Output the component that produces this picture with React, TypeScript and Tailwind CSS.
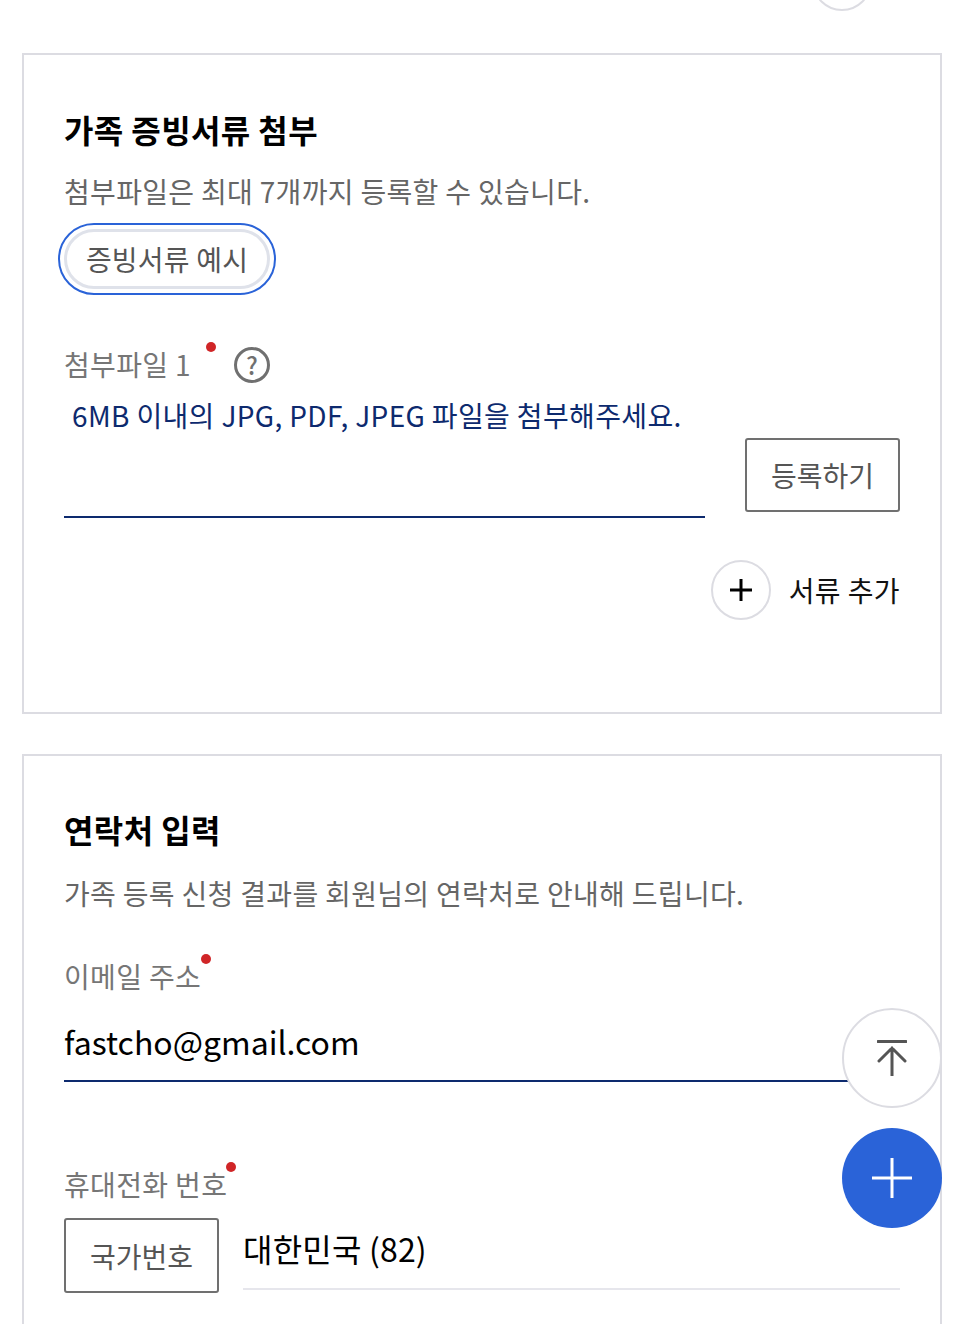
import React from 'react';

const font = { fontFamily: '"Noto Sans CJK KR", "Noto Sans", sans-serif' };

const Dot: React.FC<{ className: string }> = ({ className }) => (
  <span className={`absolute h-[10px] w-[10px] rounded-full bg-[#d02527] ${className}`} />
);

const BoxButton: React.FC<{ label: string; className?: string }> = ({ label, className = '' }) => (
  <button className={`flex w-[155px] shrink-0 items-center justify-center rounded-[3px] border-2 border-[#707070] bg-white text-[28px] leading-none text-[#555555] ${className}`}>
    {label}
  </button>
);

export default function App() {
  return (
    <div className="relative h-[1324px] w-[968px] overflow-hidden bg-white" style={font}>
      <div className="flex flex-col gap-[40px] pl-[22px] pr-[26px] pt-[53px]">
        {/* 가족 증빙서류 첨부 */}
        <section className="relative h-[661px] border-2 border-[#dcdce2] px-[40px] pt-[50px]">
          <div className="absolute right-[68px] top-[-104px] h-[60px] w-[60px] rounded-full border-2 border-[#dcdce2]" />
          <h2 className="text-[32px] font-bold leading-[48px] tracking-[0.4px] text-black">가족 증빙서류 첨부</h2>
          <p className="mt-[17px] text-[28px] leading-[42px] tracking-[0.32px] text-[#666666]">
            첨부파일은 최대 7개까지 등록할 수 있습니다.
          </p>
          <button className="mt-[11px] flex h-[72px] w-[218px] -translate-x-[6px] items-center justify-center rounded-full border-2 border-[#2a63d8] p-[4px]">
            <span className="flex h-full w-full items-center justify-center rounded-full border-[3px] border-[#dfe2ea] text-[28px] leading-none tracking-[0.2px] text-[#555555]">
              증빙서류 예시
            </span>
          </button>
          <div className="relative mt-[49px] flex h-[42px] items-center gap-[43px]">
            <span className="-translate-y-px text-[28px] leading-[42px] tracking-[0.35px] text-[#767676]">첨부파일 1</span>
            <Dot className="left-[142px] top-[-2px]" />
            <span className="flex h-[36px] w-[36px] items-center justify-center rounded-full border-[3px] border-[#707070] text-[24px] font-medium leading-none text-[#707070]">
              ?
            </span>
          </div>
          <div className="flex items-end justify-between">
            <div className="h-[132px] w-[641px] border-b-2 border-[#0d2a6e] pl-[8px] pt-[8px] text-[28px] leading-[42px] tracking-[0.36px] text-[#0d2a6e]">
              6MB 이내의 JPG, PDF, JPEG 파일을 첨부해주세요.
            </div>
            <BoxButton label="등록하기" className="mb-[6px] h-[74px]" />
          </div>
          <div className="mt-[42px] flex items-center justify-end gap-[18px]">
            <span className="flex h-[60px] w-[60px] items-center justify-center rounded-full border-2 border-[#dcdce2]">
              <svg width="22" height="22" viewBox="0 0 22 22" fill="none" stroke="#000000" strokeWidth="3">
                <path d="M0 11H22M11 0V22" />
              </svg>
            </span>
            <span className="text-[28px] leading-[42px] tracking-[0.4px] text-[#111111]">서류 추가</span>
          </div>
        </section>

        {/* 연락처 입력 */}
        <section className="h-[700px] border-2 border-[#dcdce2] px-[40px] pt-[49px]">
          <h2 className="text-[32px] font-bold leading-[48px] tracking-[0.4px] text-black">연락처 입력</h2>
          <p className="mt-[19px] text-[28px] leading-[42px] tracking-[0.32px] text-[#666666]">
            가족 등록 신청 결과를 회원님의 연락처로 안내해 드립니다.
          </p>
          <div className="relative mt-[41px] w-fit text-[28px] leading-[42px] tracking-[0.35px] text-[#767676]">
            이메일 주소
            <Dot className="right-[-10px] top-[-1px]" />
          </div>
          <div className="mt-[13px] h-[72px] border-b-2 border-[#0d2a6e] pt-[4px] text-[32px] leading-[54px] text-black">
            fastcho@gmail.com
          </div>
          <div className="relative mt-[81px] w-fit text-[28px] leading-[42px] tracking-[0.35px] text-[#767676]">
            휴대전화 번호
            <Dot className="right-[-9px] top-[-1px]" />
          </div>
          <div className="mt-[13px] flex items-start gap-[24px]">
            <BoxButton label="국가번호" className="h-[75px]" />
            <div className="h-[72px] flex-1 border-b-2 border-[#e6e6ec] text-[32px] leading-[60px] tracking-[0.2px] text-black">
              대한민국 (82)
            </div>
          </div>
        </section>
      </div>

      {/* floating buttons */}
      <button className="absolute left-[842px] top-[1008px] flex h-[100px] w-[100px] items-center justify-center rounded-full border-2 border-[#dcdce2] bg-white">
        <svg width="30" height="36" viewBox="0 0 30 36" fill="none" stroke="#555555" strokeWidth="3" strokeLinecap="round">
          <path d="M1 1.5H29M15 8V36M2 21L15 8L28 21" />
        </svg>
      </button>
      <button className="absolute left-[842px] top-[1128px] flex h-[100px] w-[100px] items-center justify-center rounded-full bg-[#2a63d8]">
        <svg width="40" height="40" viewBox="0 0 40 40" fill="none" stroke="#ffffff" strokeWidth="3" strokeLinecap="round">
          <path d="M0 20H40M20 0V40" />
        </svg>
      </button>
    </div>
  );
}
